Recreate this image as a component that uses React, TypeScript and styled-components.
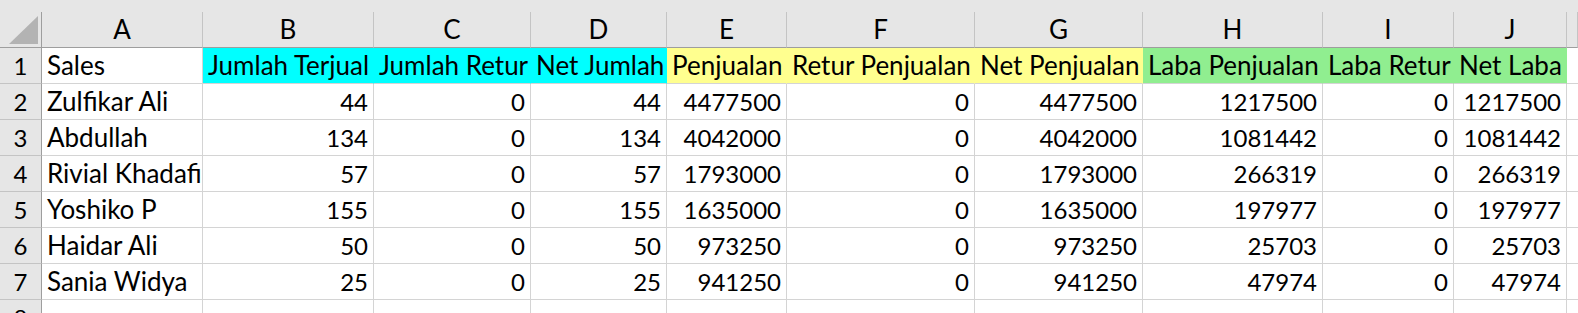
import React from "react";
import styled, { createGlobalStyle } from "styled-components";

const GlobalStyle = createGlobalStyle`
  html, body {
    margin: 0;
    padding: 0;
    background: #ffffff;
    overflow: hidden;
  }
  body {
    font-family: Lato, "Liberation Sans", sans-serif;
  }
`;

const COL_WIDTHS = [42, 161, 171, 157, 136, 120, 188, 168, 180, 131, 113];
const LETTERS = ["A", "B", "C", "D", "E", "F", "G", "H", "I", "J"];

const FILLS: Record<string, string> = {
  cyan: "#00ffff",
  yellow: "#ffff8f",
  green: "#90ee90",
};

type FillKey = "cyan" | "yellow" | "green" | undefined;

const headerRow: { text: string; fill?: FillKey }[] = [
  { text: "Sales" },
  { text: "Jumlah Terjual", fill: "cyan" },
  { text: "Jumlah Retur", fill: "cyan" },
  { text: "Net Jumlah", fill: "cyan" },
  { text: "Penjualan", fill: "yellow" },
  { text: "Retur Penjualan", fill: "yellow" },
  { text: "Net Penjualan", fill: "yellow" },
  { text: "Laba Penjualan", fill: "green" },
  { text: "Laba Retur", fill: "green" },
  { text: "Net Laba", fill: "green" },
];

const dataRows: (string | number)[][] = [
  ["Zulfikar Ali", 44, 0, 44, 4477500, 0, 4477500, 1217500, 0, 1217500],
  ["Abdullah", 134, 0, 134, 4042000, 0, 4042000, 1081442, 0, 1081442],
  ["Rivial Khadafi", 57, 0, 57, 1793000, 0, 1793000, 266319, 0, 266319],
  ["Yoshiko P", 155, 0, 155, 1635000, 0, 1635000, 197977, 0, 197977],
  ["Haidar Ali", 50, 0, 50, 973250, 0, 973250, 25703, 0, 25703],
  ["Sania Widya", 25, 0, 25, 941250, 0, 941250, 47974, 0, 47974],
  ["", "", "", "", "", "", "", "", "", ""],
];

const Sheet = styled.div`
  width: 1578px;
  height: 313px;
  overflow: hidden;
  display: flex;
  flex-direction: column;
`;

const TopStrip = styled.div`
  height: 12px;
  background: #e6e6e6;
  flex: none;
`;

const Grid = styled.div`
  display: grid;
  grid-template-columns: ${COL_WIDTHS.map((w) => `${w}px`).join(" ")} 1fr;
  grid-auto-rows: 36px;
  font-size: 26px;
  line-height: 35px;
  color: #000;
`;

const Corner = styled.div`
  position: relative;
  background: #e6e6e6;
  border-right: 1px solid #9e9e9e;
  border-bottom: 1px solid #9e9e9e;
  box-sizing: border-box;
`;

const CornerTriangle = styled.div`
  position: absolute;
  right: 3px;
  bottom: 3px;
  width: 29px;
  height: 28px;
  background: #b3b3b3;
  clip-path: polygon(100% 0, 100% 100%, 0 100%);
`;

const ColHead = styled.div`
  background: #e6e6e6;
  border-right: 1px solid #c4c4c4;
  border-bottom: 1px solid #9e9e9e;
  box-sizing: border-box;
  text-align: center;
  white-space: nowrap;
  overflow: hidden;
`;

const RowHead = styled.div`
  background: #e6e6e6;
  border-right: 1px solid #9e9e9e;
  border-bottom: 1px solid #c4c4c4;
  box-sizing: border-box;
  text-align: center;
  font-size: 24px;
  line-height: 36px;
`;

const Cell = styled.div<{ $numeric?: boolean; $fill?: string }>`
  background: ${(p) => p.$fill ?? "#ffffff"};
  border-right: 1px solid ${(p) => p.$fill ?? "#d4d4d4"};
  border-bottom: 1px solid #d4d4d4;
  box-sizing: border-box;
  padding: 0 5px 0 5px;
  text-align: ${(p) => (p.$numeric ? "right" : "left")};
  font-size: ${(p) => (p.$numeric ? "24px" : "26px")};
  line-height: ${(p) => (p.$numeric ? "36px" : "35px")};
  white-space: nowrap;
  overflow: visible;
  position: relative;
`;

const EmptyCell = styled.div`
  background: #ffffff;
  border-bottom: 1px solid #d4d4d4;
  box-sizing: border-box;
`;

export default function App() {
  return (
    <>
      <GlobalStyle />
      <Sheet>
        <TopStrip />
        <Grid>
          <Corner>
            <CornerTriangle />
          </Corner>
          {LETTERS.map((l) => (
            <ColHead key={l}>{l}</ColHead>
          ))}
          <ColHead />

          <RowHead>1</RowHead>
          {headerRow.map((c, i) => (
            <Cell key={i} $fill={c.fill ? FILLS[c.fill] : undefined}>
              {c.text}
            </Cell>
          ))}
          <EmptyCell />

          {dataRows.map((row, r) => (
            <React.Fragment key={r}>
              <RowHead>{r + 2}</RowHead>
              {row.map((v, i) => (
                <Cell key={i} $numeric={typeof v === "number"}>
                  {v}
                </Cell>
              ))}
              <EmptyCell />
            </React.Fragment>
          ))}
        </Grid>
      </Sheet>
    </>
  );
}
